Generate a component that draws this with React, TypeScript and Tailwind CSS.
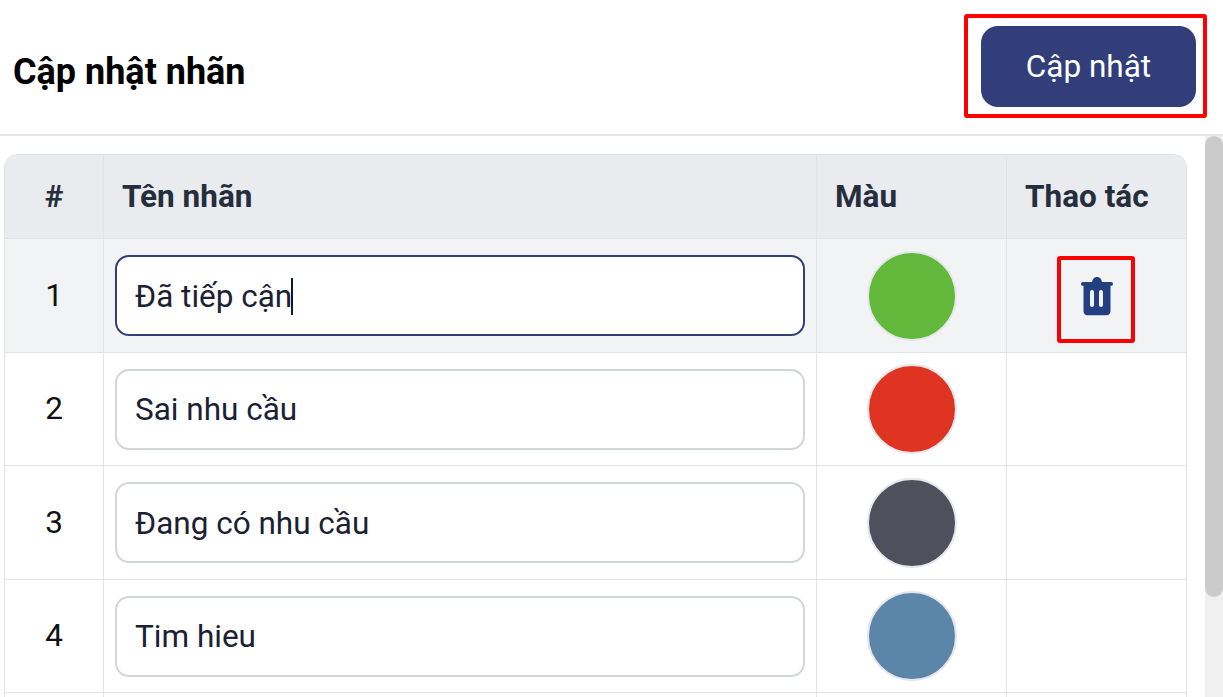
const rows = [
  { n: "1", text: "Đã tiếp cận", color: "bg-[#62b83a]", active: true },
  { n: "2", text: "Sai nhu cầu", color: "bg-[#df3422]", active: false },
  { n: "3", text: "Đang có nhu cầu", color: "bg-[#50505c]", active: false },
  { n: "4", text: "Tim hieu", color: "bg-[#5b86aa]", active: false },
];

function TrashIcon() {
  return (
    <svg width="32" height="39" viewBox="0 0 32 39" className="block">
      <path
        fill="#233f80"
        fillRule="evenodd"
        d="M11 5 C11.5 1.5 13.5 0 16 0 C18.5 0 20.5 1.5 21 5 L30 5 C31.3 5 32 5.8 32 6.9 C32 8 31.3 8.8 30 8.8 L29.5 8.8 L29.5 34 C29.5 36.6 28 38.2 25.4 38.2 L6.6 38.2 C4 38.2 2.5 36.6 2.5 34 L2.5 8.8 L2 8.8 C0.7 8.8 0 8 0 6.9 C0 5.8 0.7 5 2 5 Z M11 13 C9.9 13 9 13.9 9 15 L9 28 C9 29.1 9.9 30 11 30 C12.1 30 13 29.1 13 28 L13 15 C13 13.9 12.1 13 11 13 Z M20 13 C18.9 13 18 13.9 18 15 L18 28 C18 29.1 18.9 30 20 30 C21.1 30 22 29.1 22 28 L22 15 C22 13.9 21.1 13 20 13 Z"
      />
    </svg>
  );
}

export default function App() {
  return (
    <div className="h-[697px] w-[1223px] overflow-hidden bg-white font-['Roboto',sans-serif]">
      <header className="flex h-[136px] items-start justify-between border-b-2 border-[#e4e5ea]">
        <h1 className="mt-[47px] ml-[13px] text-[36px] leading-[50px] font-bold text-black">Cập nhật nhãn</h1>
        <div className="mt-[14px] mr-[16px] flex h-[104px] w-[243px] items-start justify-end rounded-[3px] border-4 border-[#ff0000] pt-[8px] pr-[7px]">
          <button className="h-[81px] w-[215px] rounded-[17px] bg-[#323e7a] text-[31.5px] text-white">Cập nhật</button>
        </div>
      </header>

      <div className="flex h-[561px]">
        <main className="flex-1 overflow-hidden pt-[18px] pl-[4px]">
          <div className="w-[1183px] overflow-hidden rounded-t-[14px] border-x border-t border-[#e1e3e9]">
            <div className="grid h-[84px] grid-cols-[99px_713px_190px_1fr] border-b border-[#e1e3e9] bg-[#e9ebef] text-[31.5px] font-bold text-[#252e3d]">
              <div className="flex items-center justify-center border-r border-[#e1e3e9]">#</div>
              <div className="flex items-center border-r border-[#e1e3e9] pl-[18px]">Tên nhãn</div>
              <div className="flex items-center border-r border-[#e1e3e9] pl-[18px]">Màu</div>
              <div className="flex items-center pl-[18px]">Thao tác</div>
            </div>
            {rows.map((r) => (
              <div
                key={r.n}
                className={`grid h-[113.5px] grid-cols-[99px_713px_190px_1fr] border-b border-[#e1e3e9] ${r.active ? "bg-[#f2f3f5]" : "bg-white"}`}
              >
                <div className="flex items-center justify-center border-r border-[#e1e3e9] text-[31.5px] text-[#111]">{r.n}</div>
                <div className="flex items-center border-r border-[#e1e3e9] pt-[1px] pl-[11px]">
                  <div
                    className={`flex h-[81px] w-[690px] items-center rounded-[14px] border-2 bg-white pt-[1px] pl-[18px] text-[31.5px] text-[#1b2133] ${r.active ? "border-[#323e7a]" : "border-[#d2d5da]"}`}
                  >
                    <span>{r.text}</span>
                    {r.active && <span className="ml-[-1px] h-[37px] w-[2px] bg-[#111827]" />}
                  </div>
                </div>
                <div className="flex items-center justify-center border-r border-[#e1e3e9] pt-[1px]">
                  <div className={`h-[90px] w-[90px] rounded-full border-2 border-[#e5e7eb] ${r.color}`} />
                </div>
                <div className="flex items-start justify-center pt-[17px] pr-[1px]">
                  {r.active && (
                    <div className="flex h-[87px] w-[78px] items-center justify-center rounded-[3px] border-4 border-[#ff0000] pb-[6px] pl-[1px]">
                      <TrashIcon />
                    </div>
                  )}
                </div>
              </div>
            ))}
            <div className="grid h-[10px] grid-cols-[99px_713px_190px_1fr]">
              <div className="border-r border-[#e1e3e9]" />
              <div className="border-r border-[#e1e3e9]" />
              <div className="border-r border-[#e1e3e9]" />
              <div />
            </div>
          </div>
        </main>
        <div className="w-[18px] bg-[#f0f0f0]">
          <div className="h-[461px] rounded-[9px] bg-[#cbcbcb]" />
        </div>
      </div>
    </div>
  );
}
